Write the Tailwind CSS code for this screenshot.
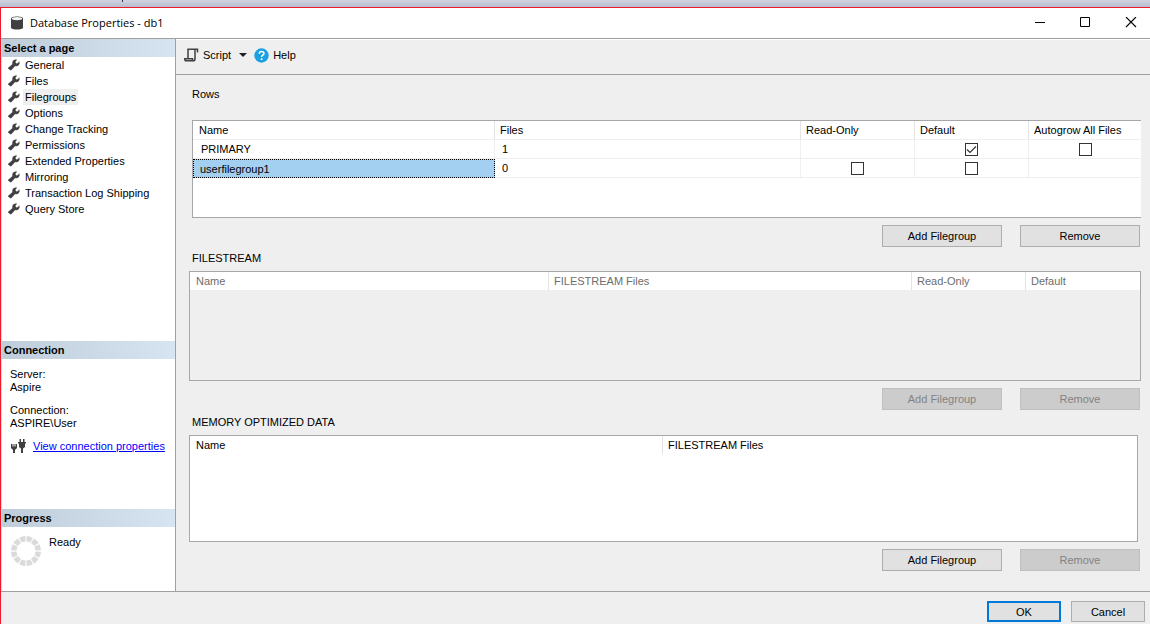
<!DOCTYPE html>
<html lang="en">
<head>
<meta charset="utf-8">
<title>Database Properties - db1</title>
<script src="https://cdn.jsdelivr.net/npm/@tailwindcss/browser@4"></script>
</head>
<body class="flex min-h-screen flex-col bg-[#efefef] font-['Liberation_Sans',Arial,sans-serif] text-[11px] leading-4 text-black">
<svg class="hidden" aria-hidden="true">
  <symbol id="wrench" viewBox="0 0 24 24"><path transform="translate(24 0) scale(-1 1)" fill="#404040" d="M24 18l-9-8.200c1-2.600.4-5.100-1.500-7-2-2-5-2.600-7.600-1.500L9.500 6 6 9.500 1.300 4.900C.2 7.500.8 10.500 2.800 12.500c1.900 1.900 4.500 2.500 7 1.500l7.700 8.500c.5.5 1.200.5 1.700 0l4.800-3.500c.5-.5.5-.5 0-1z"/></symbol>
</svg>

<div class="h-[7px] bg-linear-to-b from-[#d0d4e2] to-[#b9bccb] pl-[122px]"><div class="h-0.5 w-px bg-[#30324a]"></div></div>

<div class="flex flex-1 flex-col border-t border-l border-[#ec1c2c]">
  <header class="flex h-[30px] items-center bg-white pl-2">
    <svg class="mr-[5px] h-4 w-4" viewBox="0 0 16 16" aria-hidden="true">
      <path fill="#404040" d="M2 3.500C2 .8 14 .8 14 3.500V12.500C14 15.300 2 15.300 2 12.500Z"/>
      <ellipse cx="8" cy="3.600" rx="5.200" ry="1.700" fill="#f4f4f4"/>
    </svg>
    <h1 class="flex-1 font-['Open_Sans','Noto_Sans',sans-serif] text-[11px]">Database Properties - db1</h1>
    <button type="button" aria-label="Minimize" class="flex h-full w-9 items-center justify-center"><svg class="h-3 w-3" viewBox="0 0 12 12"><path d="M1 5.500h10" stroke="#000"/></svg></button>
    <button type="button" aria-label="Maximize" class="flex h-full w-[54px] items-center justify-center"><svg class="h-3 w-3" viewBox="0 0 12 12"><path d="M1.500 .5h9v9h-9z" fill="none" stroke="#000"/></svg></button>
    <button type="button" aria-label="Close" class="flex h-full w-[38px] items-center justify-center"><svg class="h-3 w-3" viewBox="0 0 12 12"><path d="M1 0l10 10M11 0L1 10" stroke="#000" stroke-width="1.100"/></svg></button>
  </header>

  <div class="flex flex-1 border-t border-b border-[#a0a0a0]">
    <aside class="flex w-[175px] shrink-0 flex-col border-r border-l border-[#a0a0a0] border-l-[#d8d8d8] bg-white">
      <section class="flex-1">
        <h2 class="h-[18px] bg-linear-to-r from-[#bfcddb] to-[#d7e4f2] pl-0.5 leading-[18px] font-bold">Select a page</h2>
        <nav>
          <ul class="pl-1.5">
            <li class="flex items-center gap-[3px]"><svg class="h-3 w-3"><use href="#wrench"/></svg><a href="#general" class="px-0.5">General</a></li>
            <li class="flex items-center gap-[3px]"><svg class="h-3 w-3"><use href="#wrench"/></svg><a href="#files" class="px-0.5">Files</a></li>
            <li class="flex items-center gap-[3px]"><svg class="h-3 w-3"><use href="#wrench"/></svg><a href="#filegroups" aria-current="page" class="bg-[#efefef] px-0.5">Filegroups</a></li>
            <li class="flex items-center gap-[3px]"><svg class="h-3 w-3"><use href="#wrench"/></svg><a href="#options" class="px-0.5">Options</a></li>
            <li class="flex items-center gap-[3px]"><svg class="h-3 w-3"><use href="#wrench"/></svg><a href="#tracking" class="px-0.5">Change Tracking</a></li>
            <li class="flex items-center gap-[3px]"><svg class="h-3 w-3"><use href="#wrench"/></svg><a href="#permissions" class="px-0.5">Permissions</a></li>
            <li class="flex items-center gap-[3px]"><svg class="h-3 w-3"><use href="#wrench"/></svg><a href="#extended" class="px-0.5">Extended Properties</a></li>
            <li class="flex items-center gap-[3px]"><svg class="h-3 w-3"><use href="#wrench"/></svg><a href="#mirroring" class="px-0.5">Mirroring</a></li>
            <li class="flex items-center gap-[3px]"><svg class="h-3 w-3"><use href="#wrench"/></svg><a href="#shipping" class="px-0.5">Transaction Log Shipping</a></li>
            <li class="flex items-center gap-[3px]"><svg class="h-3 w-3"><use href="#wrench"/></svg><a href="#querystore" class="px-0.5">Query Store</a></li>
          </ul>
        </nav>
      </section>
      <section class="h-[168px]">
        <h2 class="h-[18px] bg-linear-to-r from-[#bfcddb] to-[#d7e4f2] pl-0.5 leading-[18px] font-bold">Connection</h2>
        <dl class="px-2 pt-[9px] leading-[13px]">
          <dt>Server:</dt><dd>Aspire</dd>
          <dt class="pt-2.5">Connection:</dt><dd>ASPIRE\User</dd>
        </dl>
        <div class="flex items-center gap-[7px] pt-2 pl-2">
          <svg class="h-4 w-4" viewBox="0 0 16 16" aria-hidden="true">
            <path fill="#404040" d="M1 6h1.500v2.500h1V6h1v2.500h1V6H7v4L5 12v3H3v-3L1 10zM9.500 1H11v3h2V1h1.500v3H16v1.500h-1V9l-2 1.500V15h-2v-4.500L9 9V5.500H8V4h1.500z"/>
          </svg>
          <a href="#connection-properties" class="text-[#0000ff] underline">View connection properties</a>
        </div>
      </section>
      <section class="h-[82px]">
        <h2 class="h-[18px] bg-linear-to-r from-[#bfcddb] to-[#d7e4f2] pl-0.5 leading-[18px] font-bold">Progress</h2>
        <div class="flex gap-[7px] pt-[7px] pl-2">
          <svg class="mt-px h-8 w-8" viewBox="0 0 32 32" aria-hidden="true"><circle cx="16" cy="16" r="12.200" fill="none" stroke="#dadada" stroke-width="5.500" pathLength="120" stroke-dasharray="8.200 1.800" stroke-dashoffset="-0.900"/></svg>
          <p role="status">Ready</p>
        </div>
      </section>
    </aside>

    <main class="min-w-0 flex-1">
      <div class="flex h-9 items-center border-t border-b border-t-white border-b-[#a0a0a0] pb-1 pl-2">
        <button type="button" class="flex items-center">
          <svg class="mr-1 h-[15px] w-[15px]" viewBox="0 0 15 15" fill="none" stroke="#404040" stroke-width="1.500" aria-hidden="true"><path d="M4 10V1.300H13.500V4.500M11 1.500V11c0 1.500-1 1.800-2 1.800H2C.8 12.800.8 11.800.8 10.700H8.500v1.600"/></svg>
          Script
          <svg class="ml-2 h-2 w-2" viewBox="0 0 8 8" aria-hidden="true"><path d="M0 2h8L4 6z" fill="#202020"/></svg>
        </button>
        <button type="button" class="ml-[7px] flex items-center gap-1">
          <svg class="h-[15px] w-[15px]" viewBox="0 0 15 15" aria-hidden="true"><circle cx="7.500" cy="7.500" r="7.200" fill="#1ba1e2"/><path d="M5.300 5.700c0-3 4.600-2.800 4.600-.2 0 1.700-2.300 1.600-2.300 3.400M7.600 10.200v1.700" fill="none" stroke="#fff" stroke-width="1.600"/></svg>
          Help
        </button>
      </div>

      <section class="pt-[11px] pr-[9px] pl-4">
        <h3>Rows</h3>
        <div class="mt-[18px] h-[98px] border-t border-b border-l border-[#a7a7ab] bg-white">
          <table class="w-full table-fixed border-separate border-spacing-0">
            <colgroup><col class="w-[302px]"><col><col class="w-[114px]"><col class="w-[114px]"><col class="w-[112px]"></colgroup>
            <thead>
              <tr class="h-[19px] text-left">
                <th class="border-r border-b border-[#e3e3e3] border-b-[#efefef] px-1.5 py-0 font-normal">Name</th>
                <th class="border-r border-b border-[#e3e3e3] border-b-[#efefef] px-[5px] py-0 font-normal">Files</th>
                <th class="border-r border-b border-[#e3e3e3] border-b-[#efefef] px-[5px] py-0 font-normal">Read-Only</th>
                <th class="border-r border-b border-[#e3e3e3] border-b-[#efefef] px-[5px] py-0 font-normal">Default</th>
                <th class="border-b border-[#efefef] px-[5px] py-0 font-normal">Autogrow All Files</th>
              </tr>
            </thead>
            <tbody>
              <tr class="h-[19px]">
                <td class="border-r border-b border-[#efefef] px-2 py-0">PRIMARY</td>
                <td class="border-r border-b border-[#efefef] px-[7px] py-0">1</td>
                <td class="border-r border-b border-[#efefef] p-0"></td>
                <td class="border-r border-b border-[#efefef] p-0">
                  <label class="grid place-items-center">
                    <input type="checkbox" checked aria-label="PRIMARY default" class="peer col-start-1 row-start-1 h-[13px] w-[13px] appearance-none border border-[#333] bg-white">
                    <svg class="pointer-events-none invisible col-start-1 row-start-1 h-[13px] w-[13px] peer-checked:visible" viewBox="0 0 13 13"><path d="M2 6.500l3 3 6-6" fill="none" stroke="#333" stroke-width="1.200"/></svg>
                  </label>
                </td>
                <td class="border-b border-[#efefef] p-0"><label class="grid place-items-center"><input type="checkbox" aria-label="PRIMARY autogrow all files" class="h-[13px] w-[13px] appearance-none border border-[#333] bg-white"></label></td>
              </tr>
              <tr class="h-[19px]">
                <td class="border border-dotted border-black bg-[#a3cff0] px-1.5 py-0">userfilegroup1</td>
                <td class="border-r border-b border-[#efefef] px-[7px] py-0">0</td>
                <td class="border-r border-b border-[#efefef] p-0"><label class="grid place-items-center"><input type="checkbox" aria-label="userfilegroup1 read-only" class="h-[13px] w-[13px] appearance-none border border-[#333] bg-white"></label></td>
                <td class="border-r border-b border-[#efefef] p-0"><label class="grid place-items-center"><input type="checkbox" aria-label="userfilegroup1 default" class="h-[13px] w-[13px] appearance-none border border-[#333] bg-white"></label></td>
                <td class="border-b border-[#efefef] p-0"></td>
              </tr>
            </tbody>
          </table>
        </div>
        <div class="mt-[7px] flex justify-end gap-[18px] pr-px">
          <button type="button" class="h-[22px] w-[120px] border border-[#adadad] bg-[#e1e1e1]">Add Filegroup</button>
          <button type="button" class="h-[22px] w-[120px] border border-[#adadad] bg-[#e1e1e1]">Remove</button>
        </div>
      </section>

      <section class="pt-[3px] pr-[9px] pl-[13px]">
        <h3 class="pl-[3px]">FILESTREAM</h3>
        <div class="mt-[5px] h-[110px] border border-[#a7a7ab]">
          <table class="w-full table-fixed border-separate border-spacing-0 text-[#6d6d6d]">
            <colgroup><col class="w-[359px]"><col><col class="w-[114px]"><col class="w-[114px]"></colgroup>
            <thead>
              <tr class="h-[18px] bg-white text-left">
                <th class="border-r border-[#e3e3e3] px-1.5 py-0 font-normal">Name</th>
                <th class="border-r border-[#e3e3e3] px-[5px] py-0 font-normal">FILESTREAM Files</th>
                <th class="border-r border-[#e3e3e3] px-[5px] py-0 font-normal">Read-Only</th>
                <th class="px-[5px] py-0 font-normal">Default</th>
              </tr>
            </thead>
          </table>
        </div>
        <div class="mt-[7px] flex justify-end gap-[18px] pr-px">
          <button type="button" disabled class="h-[22px] w-[120px] border border-[#bfbfbf] bg-[#cccccc] text-[#838383]">Add Filegroup</button>
          <button type="button" disabled class="h-[22px] w-[120px] border border-[#bfbfbf] bg-[#cccccc] text-[#838383]">Remove</button>
        </div>
      </section>

      <section class="pt-1 pr-[9px] pl-[13px]">
        <h3 class="pl-[3px]">MEMORY OPTIMIZED DATA</h3>
        <div class="mt-[5px] mr-[3px] h-[107px] border border-[#a7a7ab] bg-white">
          <table class="w-full table-fixed border-separate border-spacing-0">
            <colgroup><col class="w-[473px]"><col></colgroup>
            <thead>
              <tr class="h-[18px] text-left">
                <th class="border-r border-[#e3e3e3] px-1.5 py-0 font-normal">Name</th>
                <th class="px-[5px] py-0 font-normal">FILESTREAM Files</th>
              </tr>
            </thead>
          </table>
        </div>
        <div class="mt-[7px] flex justify-end gap-[18px] pr-px">
          <button type="button" class="h-[22px] w-[120px] border border-[#adadad] bg-[#e1e1e1]">Add Filegroup</button>
          <button type="button" disabled class="h-[22px] w-[120px] border border-[#bfbfbf] bg-[#cccccc] text-[#838383]">Remove</button>
        </div>
      </section>
    </main>
  </div>

  <footer class="flex h-8 items-start justify-end gap-2.5 pt-[9px] pr-[5px]">
    <button type="button" class="flex h-[21px] w-[74px] items-center justify-center border-2 border-[#0078d7] bg-[#e1e1e1]">OK</button>
    <button type="button" class="flex h-[21px] w-[74px] items-center justify-center border border-[#adadad] bg-[#e1e1e1]">Cancel</button>
  </footer>
</div>
</body>
</html>
